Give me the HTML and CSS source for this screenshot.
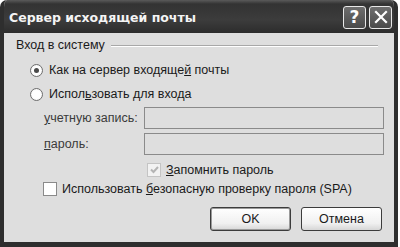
FILE: index.html
```html
<!DOCTYPE html>
<html lang="ru">
<head>
    <meta charset="UTF-8">
    <title>Сервер исходящей почты</title>
    <link rel="stylesheet" href="styles.css">
</head>
<body>

    <div class="window">
        <!-- Заголовок окна -->
        <div class="titlebar">
            <span class="title">Сервер исходящей почты</span>
            <div class="title-buttons">
                <span class="tb-btn">?</span>
                <span class="tb-btn">
                    <svg width="14" height="14" viewBox="0 0 14 14"><path d="M2 2 L12 12 M12 2 L2 12" stroke="#fff" stroke-width="2.2" stroke-linecap="square"/></svg>
                </span>
            </div>
        </div>

        <div class="content">
            <div class="group-header">
                <span>Вход в систему</span>
                <div class="group-line"></div>
            </div>

            <div class="option-row first">
                <span class="radio checked"></span>
                <span>Как на сервер входяще<u>й</u> почты</span>
            </div>
            <div class="option-row">
                <span class="radio"></span>
                <span>Испол<u>ь</u>зовать для входа</span>
            </div>

            <div class="field-row first">
                <label><u>у</u>четную запись:</label>
                <div class="input"></div>
            </div>
            <div class="field-row">
                <label><u>п</u>ароль:</label>
                <div class="input"></div>
            </div>

            <div class="check-row remember">
                <span class="checkbox disabled">
                    <svg width="11" height="11" viewBox="0 0 11 11"><path d="M2 5.5 L4.5 8 L9 3" fill="none" stroke="#b4b4b4" stroke-width="2"/></svg>
                </span>
                <span><u>З</u>апомнить пароль</span>
            </div>
            <div class="check-row spa">
                <span class="checkbox"></span>
                <span>Использовать <u>б</u>езопасную проверку пароля (SPA)</span>
            </div>

            <div class="buttons">
                <button class="btn default">OK</button>
                <button class="btn">Отмена</button>
            </div>
        </div>
    </div>

</body>
</html>
```

FILE: styles.css
```css
/* Общие стили */
body {
    margin: 0;
    padding: 0;
    background-color: #ffffff;
    font-family: "Liberation Sans", Arial, sans-serif;
    font-size: 12.5px;
    color: #1a1a1a;
}

u {
    text-decoration: underline;
    text-underline-offset: 1px;
}

/* Окно */
.window {
    width: 398px;
    height: 247px;
    background-color: #dedede;
    border-left: 4px solid #2e2e2e;
    border-right: 4px solid #2e2e2e;
    border-bottom: 5px solid #2e2e2e;
    border-radius: 7px 7px 0 0;
    box-sizing: border-box;
    overflow: hidden;
}

.titlebar {
    height: 33px;
    margin: 0 -4px;
    padding: 0 6px 0 9px;
    display: flex;
    align-items: center;
    justify-content: space-between;
    background: linear-gradient(#5a5a5a 0px, #333333 4px, #3c3c3c 20px, #2c2c2c 33px);
    border-radius: 7px 7px 0 0;
}

.title {
    font-family: "DejaVu Sans", sans-serif;
    font-weight: bold;
    font-size: 12.5px;
    color: #f4f4f4;
    margin-top: 1px;
}

.title-buttons {
    display: flex;
    gap: 3px;
    margin-top: 1px;
}

.tb-btn {
    width: 21px;
    height: 21px;
    border: 1px solid #e8e8e8;
    border-radius: 3px;
    background: linear-gradient(#6e6e6e, #4a4a4a);
    color: #ffffff;
    font-family: "DejaVu Sans", sans-serif;
    font-weight: bold;
    font-size: 17px;
    display: flex;
    align-items: center;
    justify-content: center;
}

/* Содержимое */
.content {
    padding: 2px 10px 0 12px;
}

.group-header {
    height: 20px;
    display: flex;
    align-items: center;
}

.group-line {
    flex: 1;
    height: 0;
    margin: 1px 6px 0 6px;
    border-top: 1px solid #a8a8a8;
    border-bottom: 1px solid #ffffff;
}

.option-row {
    height: 24px;
    display: flex;
    align-items: center;
    padding-left: 14px;
}

.option-row.first {
    margin-top: 3px;
}

.radio {
    width: 11px;
    height: 11px;
    border: 1px solid #6e6e6e;
    border-radius: 50%;
    background: radial-gradient(#ffffff 50%, #e6e6e6);
    margin-right: 6px;
    display: flex;
    align-items: center;
    justify-content: center;
}

.radio.checked::after {
    content: "";
    width: 5px;
    height: 5px;
    border-radius: 50%;
    background-color: #4a4a4a;
}

.field-row {
    display: flex;
    align-items: center;
    margin-top: 4px;
}

.field-row.first {
    margin-top: 1px;
}

.field-row label {
    width: 129px;
    padding-left: 28px;
    box-sizing: border-box;
    white-space: nowrap;
    color: #3a3a3a;
}

.input {
    width: 240px;
    height: 20px;
    border: 1px solid #8a8a8a;
    background-color: #dedede;
}

.check-row {
    height: 19px;
    display: flex;
    align-items: center;
}

.check-row.remember {
    margin-top: 5px;
    padding-left: 131px;
}

.check-row.spa {
    padding-left: 27px;
}

.checkbox {
    width: 12px;
    height: 12px;
    border: 1px solid #8a8a8a;
    background-color: #ffffff;
    margin-right: 5px;
    display: flex;
    align-items: center;
    justify-content: center;
}

.checkbox.disabled {
    border-color: #c4c4c4;
    background-color: #f2f2f2;
}

/* Кнопки */
.buttons {
    display: flex;
    justify-content: flex-end;
    gap: 10px;
    margin-top: 9px;
    padding-right: 2px;
}

.btn {
    width: 81px;
    height: 24px;
    border: 1px solid #3c3c3c;
    border-radius: 3px;
    background: linear-gradient(#ffffff, #f0f0f0 70%, #d6d6d6);
    font-family: "Liberation Sans", Arial, sans-serif;
    font-size: 12.5px;
    color: #1a1a1a;
    padding: 0;
}

.btn.default {
    box-shadow: inset 0 0 0 1px #9a9a9a;
}
```
